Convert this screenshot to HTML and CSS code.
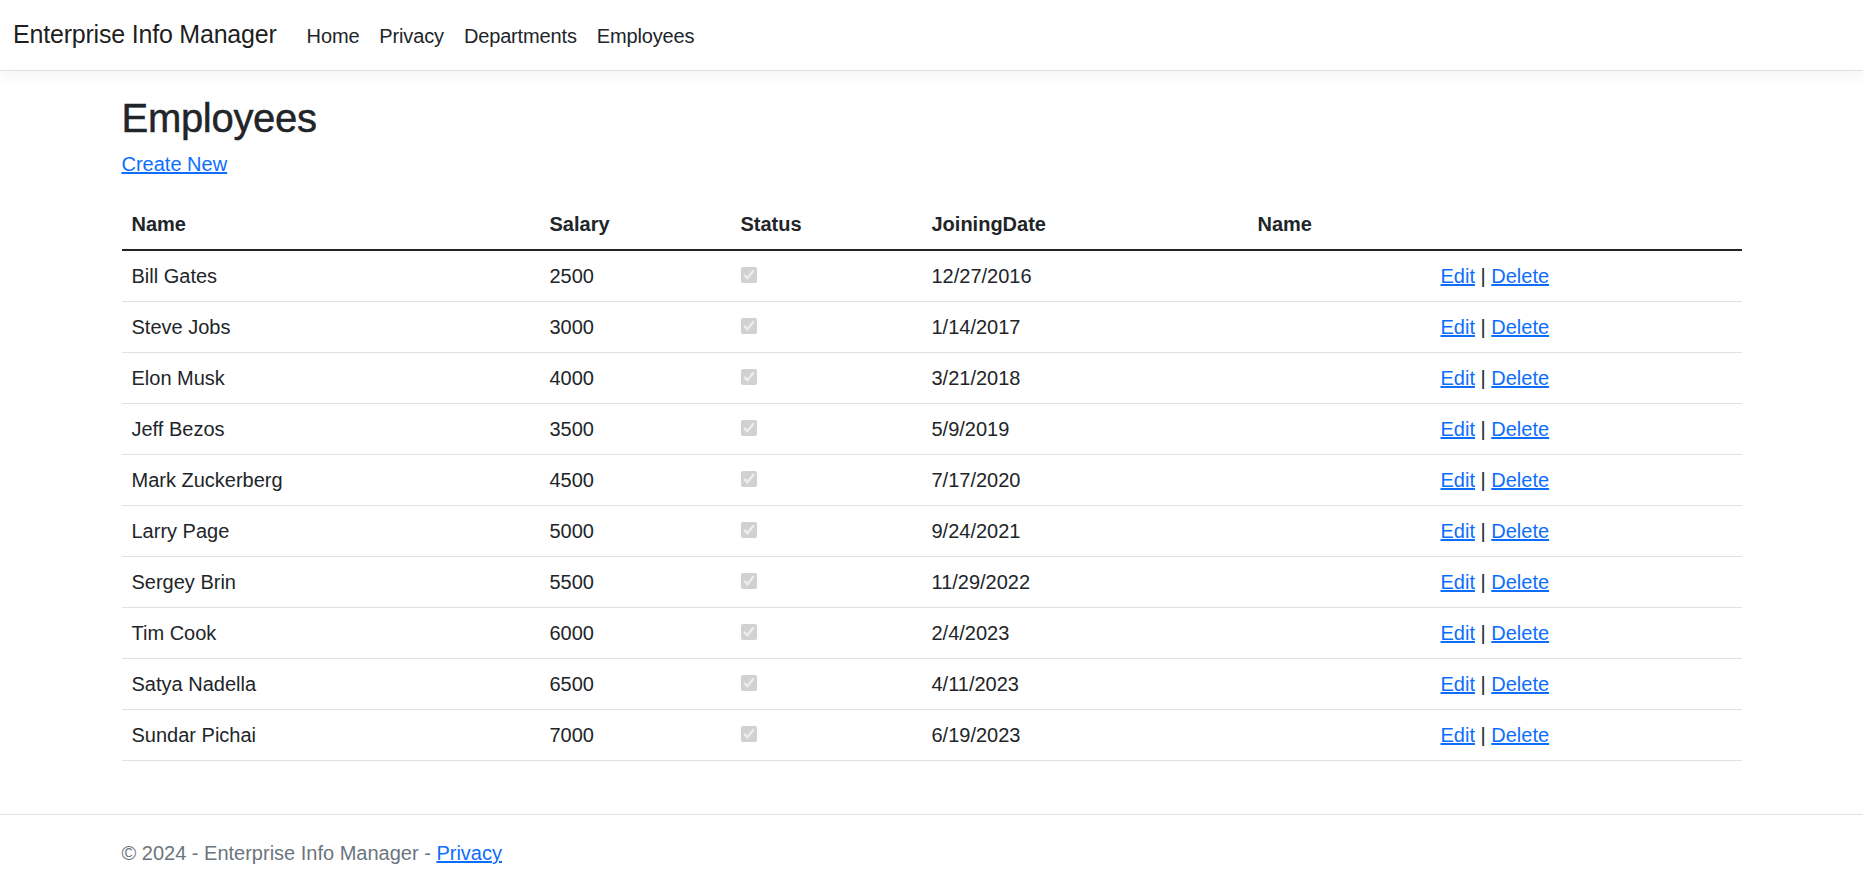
FILE: index.html
```html
<!DOCTYPE html>
<html lang="en">
<head>
<meta charset="utf-8">
<title>Employees - Enterprise Info Manager</title>
<link rel="stylesheet" href="styles.css">
</head>
<body>
<header class="site-header">
  <nav class="navbar">
    <a class="brand" href="#">Enterprise Info Manager</a>
    <ul class="nav-list">
      <li><a class="nav-link" href="#">Home</a></li>
      <li><a class="nav-link" href="#">Privacy</a></li>
      <li><a class="nav-link" href="#">Departments</a></li>
      <li><a class="nav-link" href="#">Employees</a></li>
    </ul>
  </nav>
</header>

<main class="container main">
  <h1 class="page-title">Employees</h1>
  <p class="create"><a href="#">Create New</a></p>
  <table class="table">
    <colgroup>
      <col class="c-name">
      <col class="c-salary">
      <col class="c-status">
      <col class="c-date">
      <col class="c-dept">
      <col class="c-actions">
    </colgroup>
    <thead>
      <tr>
        <th>Name</th>
        <th>Salary</th>
        <th>Status</th>
        <th>JoiningDate</th>
        <th>Name</th>
        <th></th>
      </tr>
    </thead>
    <tbody>
      <tr><td>Bill Gates</td><td>2500</td><td><input class="check-box" type="checkbox" checked disabled></td><td>12/27/2016</td><td></td><td><a href="#">Edit</a> | <a href="#">Delete</a></td></tr>
      <tr><td>Steve Jobs</td><td>3000</td><td><input class="check-box" type="checkbox" checked disabled></td><td>1/14/2017</td><td></td><td><a href="#">Edit</a> | <a href="#">Delete</a></td></tr>
      <tr><td>Elon Musk</td><td>4000</td><td><input class="check-box" type="checkbox" checked disabled></td><td>3/21/2018</td><td></td><td><a href="#">Edit</a> | <a href="#">Delete</a></td></tr>
      <tr><td>Jeff Bezos</td><td>3500</td><td><input class="check-box" type="checkbox" checked disabled></td><td>5/9/2019</td><td></td><td><a href="#">Edit</a> | <a href="#">Delete</a></td></tr>
      <tr><td>Mark Zuckerberg</td><td>4500</td><td><input class="check-box" type="checkbox" checked disabled></td><td>7/17/2020</td><td></td><td><a href="#">Edit</a> | <a href="#">Delete</a></td></tr>
      <tr><td>Larry Page</td><td>5000</td><td><input class="check-box" type="checkbox" checked disabled></td><td>9/24/2021</td><td></td><td><a href="#">Edit</a> | <a href="#">Delete</a></td></tr>
      <tr><td>Sergey Brin</td><td>5500</td><td><input class="check-box" type="checkbox" checked disabled></td><td>11/29/2022</td><td></td><td><a href="#">Edit</a> | <a href="#">Delete</a></td></tr>
      <tr><td>Tim Cook</td><td>6000</td><td><input class="check-box" type="checkbox" checked disabled></td><td>2/4/2023</td><td></td><td><a href="#">Edit</a> | <a href="#">Delete</a></td></tr>
      <tr><td>Satya Nadella</td><td>6500</td><td><input class="check-box" type="checkbox" checked disabled></td><td>4/11/2023</td><td></td><td><a href="#">Edit</a> | <a href="#">Delete</a></td></tr>
      <tr><td>Sundar Pichai</td><td>7000</td><td><input class="check-box" type="checkbox" checked disabled></td><td>6/19/2023</td><td></td><td><a href="#">Edit</a> | <a href="#">Delete</a></td></tr>
    </tbody>
  </table>
</main>

<footer class="footer">
  <div class="container">
    &copy; 2024 - Enterprise Info Manager - <a href="#">Privacy</a>
  </div>
</footer>
</body>
</html>
```
FILE: styles.css
```css
* {
  box-sizing: border-box;
}

html, body {
  margin: 0;
  padding: 0;
}

body {
  font-family: "Liberation Sans", Arial, sans-serif;
  font-size: 20px;
  line-height: 30px;
  color: #212529;
  background: #fff;
  min-height: 100vh;
  display: flex;
  flex-direction: column;
}

a {
  color: #0d6efd;
  text-decoration: underline;
}

.site-header {
  background: #fff;
  border-bottom: 1px solid #dee2e6;
  box-shadow: 0 5px 15px rgba(0, 0, 0, 0.05);
  position: relative;
  z-index: 1;
}

.navbar {
  display: flex;
  align-items: center;
  padding: 10px 15px 10px 13px;
  height: 70px;
}

.brand {
  font-size: 25px;
  line-height: 37.5px;
  padding: 6px 0 6px;
  margin-right: 20px;
  color: rgba(0, 0, 0, 0.9);
  text-decoration: none;
  white-space: nowrap;
  letter-spacing: -0.2px;
}

.nav-list {
  list-style: none;
  display: flex;
  margin: 0;
  padding: 0;
}

.nav-link {
  display: block;
  padding: 11px 10px 9px;
  color: #212529;
  text-decoration: none;
  letter-spacing: -0.15px;
}

.container {
  width: 100%;
  max-width: 1650px;
  margin: 0 auto;
  padding: 0 15px;
}

.main {
  flex: 1;
  padding-top: 20px;
  padding-bottom: 20px;
}

.page-title {
  font-size: 40px;
  line-height: 48px;
  font-weight: 500;
  margin: 0 0 7px;
  padding-top: 3px;
  letter-spacing: -0.3px;
  -webkit-text-stroke: 0.5px #212529;
}

.create {
  margin: 0 0 20px;
}

.table {
  width: 100%;
  border-collapse: collapse;
  table-layout: fixed;
  margin-bottom: 20px;
}

.c-name { width: 418px; }
.c-salary { width: 191px; }
.c-status { width: 191px; }
.c-date { width: 326px; }
.c-dept { width: 183px; }
.c-actions { width: 311px; }

.table th {
  text-align: left;
  font-weight: 700;
  padding: 10px 10px;
  border-bottom: 2px solid #212529;
}

.table td {
  padding: 10px 10px;
  border-bottom: 1px solid #dee2e6;
  white-space: nowrap;
}

.check-box {
  width: 16px;
  height: 16px;
  margin: 0;
}

.footer {
  border-top: 1px solid #dee2e6;
  height: 71px;
  line-height: 75px;
  padding-top: 1px;
  color: #6c757d;
  white-space: nowrap;
  overflow: hidden;
}
```
